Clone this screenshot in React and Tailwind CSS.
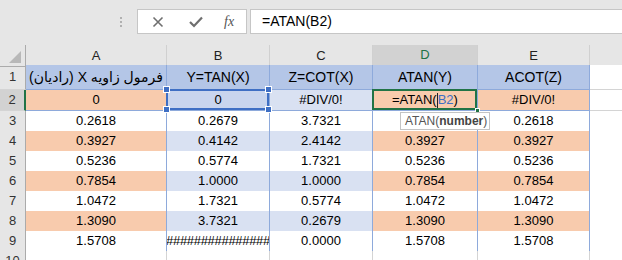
import React from 'react';

const font = { fontFamily: '"Liberation Sans", "DejaVu Sans", sans-serif' };

const rows = [
	{ n: 2, a: '0', b: '0', c: '#DIV/0!', d: '', e: '#DIV/0!' },
	{ n: 3, a: '0.2618', b: '0.2679', c: '3.7321', d: '', e: '0.2618' },
	{ n: 4, a: '0.3927', b: '0.4142', c: '2.4142', d: '0.3927', e: '0.3927' },
	{ n: 5, a: '0.5236', b: '0.5774', c: '1.7321', d: '0.5236', e: '0.5236' },
	{ n: 6, a: '0.7854', b: '1.0000', c: '1.0000', d: '0.7854', e: '0.7854' },
	{ n: 7, a: '1.0472', b: '1.7321', c: '0.5774', d: '1.0472', e: '1.0472' },
	{ n: 8, a: '1.3090', b: '3.7321', c: '0.2679', d: '1.3090', e: '1.3090' },
	{ n: 9, a: '1.5708', b: '###############', c: '0.0000', d: '1.5708', e: '1.5708' },
];

const grid = 'grid grid-cols-[26px_141px_103px_103px_105px_112px_1fr]';

const Handle = ({ className }) => (
	<div className={`absolute w-[7px] h-[7px] bg-[#3f6fc4] border border-white ${className}`} />
);

const DataRow = ({ r }) => {
	const even = r.n % 2 === 0;
	const orange = even ? 'bg-[#f8cbad]' : 'bg-white';
	const lav = even ? 'bg-[#d9e1f2]' : 'bg-white';
	const cell = 'flex items-center justify-center border-r border-b border-[#8eaadb] text-[13px] text-black';
	const h = r.n === 2 ? 'h-[21px]' : 'h-[20px]';
	return (
		<div className={`${grid} ${h}`}>
			{r.n === 2 ? (
				<div className='flex items-center justify-center bg-[#d2d2d2] border-r-2 border-r-[#217346] border-b border-b-[#d4d4d4] text-[13px] text-[#333]'>
					{r.n}
				</div>
			) : (
				<div className='flex items-center justify-center bg-[#e6e6e6] border-r border-r-[#ababab] border-b border-b-[#d4d4d4] text-[13px] text-[#333]'>
					{r.n}
				</div>
			)}
			<div className={`${cell} ${orange}`}>{r.a}</div>
			{r.n === 2 ? (
				<div className={`${cell} relative bg-[#c9d5ee]`}>
					{r.b}
					<div className='absolute -left-px -top-px -right-0 -bottom-0 border-2 border-[#3f6fc4]' />
					<Handle className='-left-[4px] -top-[4px]' />
					<Handle className='-right-[3px] -top-[4px]' />
					<Handle className='-left-[4px] -bottom-[3px]' />
					<Handle className='-right-[3px] -bottom-[3px]' />
				</div>
			) : r.n === 9 ? (
				<div className={`${cell} ${lav} overflow-hidden text-[12px] tracking-[-0.3px]`}>{r.b}</div>
			) : (
				<div className={`${cell} ${lav}`}>{r.b}</div>
			)}
			<div className={`${cell} ${lav}`}>{r.c}</div>
			{r.n === 2 ? (
				<div className={`${cell} relative ${orange}`}>
					<span>=ATAN(</span>
					<span className='inline-block w-px h-[15px] bg-[#222]' />
					<span className='text-[#3f6fc4]'>B2</span>
					<span>)</span>
					<div className='absolute -left-px -top-px -right-0 -bottom-0 border-2 border-[#217346]' />
					<div className='absolute -right-[3px] -bottom-[3px] w-[5px] h-[5px] bg-[#217346] border border-white' />
				</div>
			) : (
				<div className={`${cell} ${orange}`}>{r.d}</div>
			)}
			<div className={`${cell} ${orange}`}>{r.e}</div>
			<div className='border-b border-[#d4d4d4] bg-white' />
		</div>
	);
};

const App = () => {
	return (
		<div className='relative w-[622px] h-[260px] overflow-hidden bg-[#e6e6e6]' style={font}>
			{/* formula bar */}
			<div className='flex h-[45px] items-start pt-[9px]'>
				<div className='w-[120px]' />
				<div className='flex flex-col gap-[2px] pt-[8px] w-[17px]'>
					<div className='w-[2px] h-[2px] bg-[#b0b0b0]' />
					<div className='w-[2px] h-[2px] bg-[#b0b0b0]' />
					<div className='w-[2px] h-[2px] bg-[#b0b0b0]' />
				</div>
				<div className='flex items-center w-[110px] h-[25px] bg-white border border-[#c6c6c6]'>
					<svg className='ml-[14px]' width='12' height='12' viewBox='0 0 12 12'>
						<path d='M1.5 1.5 L10.5 10.5 M10.5 1.5 L1.5 10.5' stroke='#6f6f6f' strokeWidth='1.6' />
					</svg>
					<svg className='ml-[25px]' width='14' height='12' viewBox='0 0 14 12'>
						<path d='M1 6 L5 10 L13 1.5' stroke='#6f6f6f' strokeWidth='2.2' fill='none' />
					</svg>
					<span className='ml-[21px] text-[14px] italic text-[#555]' style={{ fontFamily: '"Liberation Serif", serif' }}>
						fx
					</span>
				</div>
				<div className='flex items-center flex-1 ml-[3px] h-[25px] bg-white border-y border-l border-[#c6c6c6] pl-[11px] text-[14px] text-black'>
					=ATAN(B2)
				</div>
			</div>

			{/* column headers */}
			<div className={`${grid} h-[20px]`}>
				<div className='relative border-r border-b border-[#ababab] bg-[#e6e6e6]'>
					<div className='absolute right-[4px] bottom-[3px] w-0 h-0 border-l-[12px] border-l-transparent border-b-[12px] border-b-[#b8b8b8]' />
				</div>
				{['A', 'B', 'C'].map((c) => (
					<div key={c} className='flex items-center justify-center border-r border-r-[#d0d0d0] border-b border-b-[#ababab] text-[13px] text-[#222]'>
						{c}
					</div>
				))}
				<div className='flex items-center justify-center bg-[#d2d2d2] border-r border-r-[#d0d0d0] border-b-2 border-b-[#217346] text-[13px] text-[#217346]'>
					D
				</div>
				<div className='flex items-center justify-center border-r border-r-[#d0d0d0] border-b border-b-[#ababab] text-[13px] text-[#222]'>
					E
				</div>
				<div className='border-b border-b-[#ababab]' />
			</div>

			{/* row 1 */}
			<div className={`${grid} h-[25px]`}>
				<div className='flex items-center justify-center bg-[#e6e6e6] border-r border-r-[#ababab] border-b border-b-[#d4d4d4] text-[13px] text-[#333]'>
					1
				</div>
				<div dir='rtl' className='flex items-center justify-center bg-[#b4c6e7] border-r border-b border-[#8eaadb] text-[14px] text-black whitespace-nowrap'>
					فرمول زاویه X (رادیان)
				</div>
				<div className='flex items-center justify-center bg-[#b4c6e7] border-r border-b border-[#8eaadb] text-[14px] text-black'>Y=TAN(X)</div>
				<div className='flex items-center justify-center bg-[#b4c6e7] border-r border-b border-[#8eaadb] text-[14px] text-black'>Z=COT(X)</div>
				<div className='flex items-center justify-center bg-[#b4c6e7] border-r border-b border-[#8eaadb] text-[14px] text-black'>ATAN(Y)</div>
				<div className='flex items-center justify-center bg-[#b4c6e7] border-r border-b border-[#8eaadb] text-[14px] text-black'>ACOT(Z)</div>
				<div className='bg-white border-b border-[#d4d4d4]' />
			</div>

			{rows.map((r) => (
				<DataRow key={r.n} r={r} />
			))}

			{/* row 10 */}
			<div className={`${grid} h-[20px]`}>
				<div className='flex items-center justify-center bg-[#e6e6e6] border-r border-r-[#ababab] text-[13px] text-[#333]'>10</div>
				<div className='bg-white border-r border-[#d4d4d4]' />
				<div className='bg-white border-r border-[#d4d4d4]' />
				<div className='bg-white border-r border-[#d4d4d4]' />
				<div className='bg-white border-r border-[#d4d4d4]' />
				<div className='bg-white border-r border-[#d4d4d4]' />
				<div className='bg-white' />
			</div>

			{/* function tooltip */}
			<div className='absolute left-[400px] top-[112px] w-[90px] h-[18px] flex items-center pl-[4px] bg-white border border-[#c4c4c4] text-[12px] text-[#555]'>
				ATAN(<span className='font-bold text-[#444]'>number</span>)
			</div>
		</div>
	);
};

export default App;
